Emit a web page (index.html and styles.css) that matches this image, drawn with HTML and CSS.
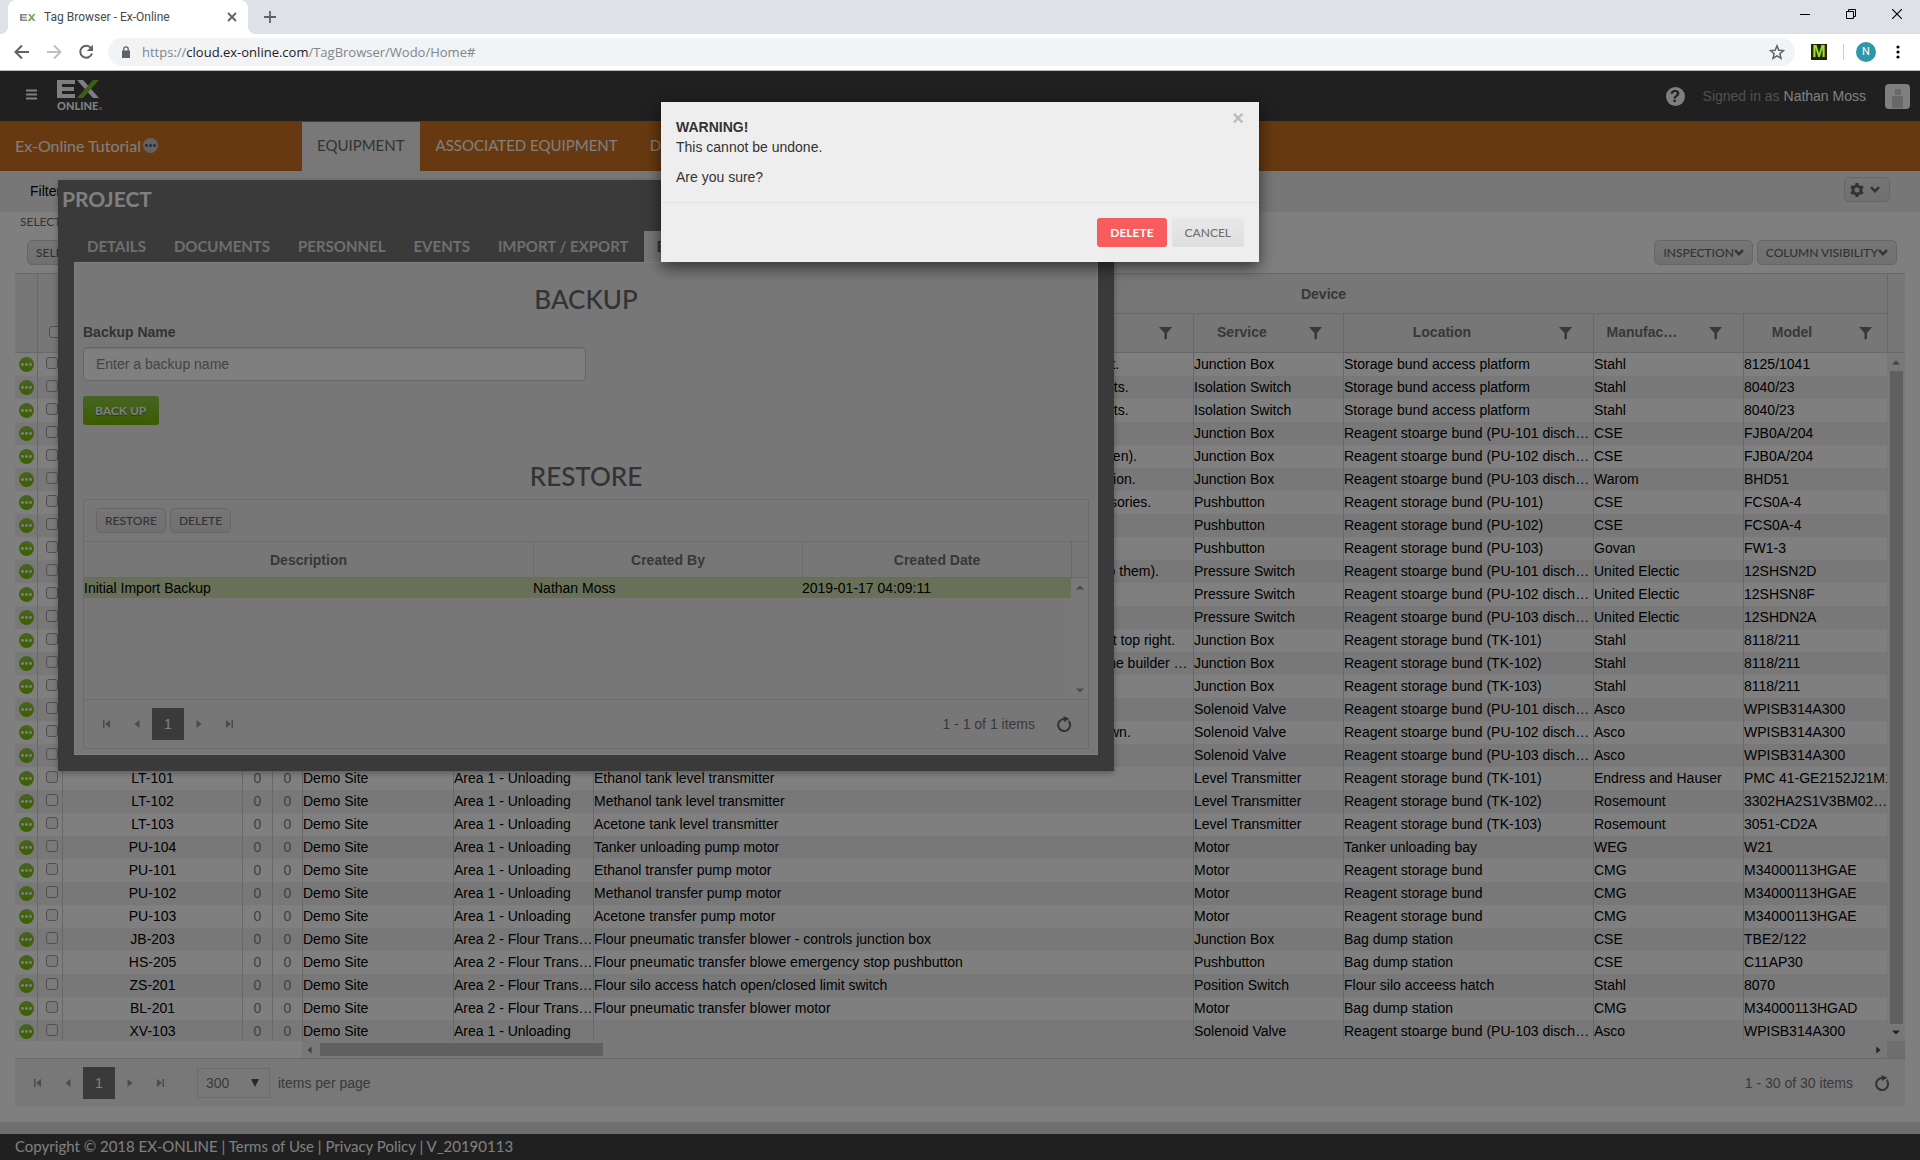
FILE: index.html
```html
<!DOCTYPE html>
<html lang="en">
<head>
<meta charset="utf-8">
<title>Tag Browser - Ex-Online</title>
<link rel="stylesheet" href="styles.css">
</head>
<body>
<svg class="defs" aria-hidden="true">
  <symbol id="i-funnel" viewBox="0 0 13 13"><path d="M0 0h13L8 6v5.500L5.500 13V6z"/></symbol>
  <symbol id="i-chev" viewBox="0 0 10 7"><path d="M1 1.200l4 4 4-4" fill="none" stroke="currentColor" stroke-width="2.400"/></symbol>
  <symbol id="i-first" viewBox="0 0 8 8"><path d="M0 0h1.500v8H0zM7 0v8L2 4z"/></symbol>
  <symbol id="i-prev" viewBox="0 0 8 8"><path d="M6.500 0v8l-5-4z"/></symbol>
  <symbol id="i-next" viewBox="0 0 8 8"><path d="M1.500 0v8l5-4z"/></symbol>
  <symbol id="i-last" viewBox="0 0 8 8"><path d="M6.500 0H8v8H6.500zM1 0v8l5-4z"/></symbol>
  <symbol id="i-up" viewBox="0 0 8 5"><path d="M0 4.500h8L4 .5z"/></symbol>
  <symbol id="i-down" viewBox="0 0 8 5"><path d="M0 .5h8l-4 4z"/></symbol>
  <symbol id="i-refresh" viewBox="0 0 16 16"><path d="M12.600 5A6 6 0 1 1 8 3" fill="none" stroke="currentColor" stroke-width="2"/><path d="M7.500 0l6 2.800-5.500 3.200z"/></symbol>
</svg>

<header class="browser">
  <div class="tabstrip">
    <div class="tab">
      <svg class="favicon" width="16" height="9" viewBox="0 0 16 9"><path d="M0 1h7v1.500H2v1.200h4.500v1.500H2v1.300h5V8H0z" fill="#8a8a8a"/><path d="M8 1h2l5.500 7h-2.200z" fill="#8a8a8a"/><path d="M13.500 1h2L10 8H7.500z" fill="#6cb52d"/></svg>
      <span class="tab-title">Tag Browser - Ex-Online</span>
      <button class="plain" aria-label="Close tab"><svg width="10" height="10" viewBox="0 0 10 10"><path d="M1 1l8 8M9 1L1 9" stroke="#5f6368" stroke-width="1.800"/></svg></button>
    </div>
    <button class="plain newtab" aria-label="New tab"><svg width="12" height="12" viewBox="0 0 12 12"><path d="M6 0v12M0 6h12" stroke="#5f6368" stroke-width="1.800"/></svg></button>
    <div class="winbtns">
      <button class="plain" aria-label="Minimize"><svg width="10" height="10"><path d="M0 5.500h10" stroke="#000"/></svg></button>
      <button class="plain" aria-label="Restore"><svg width="10" height="10"><path d="M.5 2.500h7v7h-7zM2.500 2.500v-2h7v7h-2" fill="none" stroke="#000"/></svg></button>
      <button class="plain" aria-label="Close"><svg width="10" height="10"><path d="M0 0l10 10M10 0L0 10" stroke="#000" stroke-width="1.200"/></svg></button>
    </div>
  </div>
  <div class="toolbar">
    <button class="plain nav" aria-label="Back"><svg width="16" height="16" viewBox="0 0 16 16"><path d="M15 8H2M8 1.500L1.500 8 8 14.500" fill="none" stroke="#5f6368" stroke-width="2"/></svg></button>
    <button class="plain nav" aria-label="Forward"><svg width="16" height="16" viewBox="0 0 16 16"><path d="M1 8h13M8 1.500L14.500 8 8 14.500" fill="none" stroke="#bdbfc1" stroke-width="2"/></svg></button>
    <button class="plain nav" aria-label="Reload"><svg width="16" height="16" viewBox="0 0 16 16"><path d="M13 4A6 6 0 1 0 14 9.500" fill="none" stroke="#5f6368" stroke-width="2"/><path d="M15 .8V7H8.800z" fill="#5f6368"/></svg></button>
    <div class="address">
      <svg width="8" height="12" viewBox="0 0 8 12"><path d="M0 4.500h8V12H0z" fill="#5f6368"/><path d="M1.800 5V3a2.200 2.200 0 0 1 4.400 0v2" fill="none" stroke="#5f6368" stroke-width="1.300"/></svg>
      <span class="url">https://<b>cloud.ex-online.com</b>/TagBrowser/Wodo/Home#</span>
      <svg width="16" height="16" viewBox="0 0 16 16"><path d="M8 1.800l1.800 4.400 4.700.4-3.600 3.100 1.100 4.600-4-2.500-4 2.500 1.100-4.600L1.500 6.600l4.700-.4z" fill="none" stroke="#5f6368" stroke-width="1.500"/></svg>
    </div>
    <span class="ext">M</span>
    <span class="sep"></span>
    <span class="profile">N</span>
    <button class="plain" aria-label="Menu"><svg width="4" height="14" fill="#5f6368"><circle cx="2" cy="2" r="1.600"/><circle cx="2" cy="7" r="1.600"/><circle cx="2" cy="12" r="1.600"/></svg></button>
  </div>
</header>

<div class="app">
  <header class="masthead">
    <button class="plain burger" aria-label="Menu"><svg width="11" height="11"><path d="M0 1.500h11M0 5.500h11M0 9.500h11" stroke="#fff" stroke-width="1.800"/></svg></button>
    <a class="logo" href="#" aria-label="Ex Online">
      <svg width="43" height="18" viewBox="0 0 43 18"><path d="M0 0h18v4H5v3h12v4H5v3h13v4H0z" fill="#fff"/><path d="M20 0h6l16 18h-6z" fill="#fff"/><path d="M36 0h6L26 18h-6z" fill="#7cc02c"/></svg>
      <span class="logo-text">ONLINE<i></i></span>
    </a>
    <div class="user">
      <span class="help">?</span>
      <span class="signed">Signed in as <b>Nathan Moss</b></span>
      <svg width="25" height="25"><rect width="25" height="25" rx="4" fill="#fff"/><path d="M10 5h6v6h-6zM7 12h11v12H7z" fill="#d0d0d0"/></svg>
    </div>
  </header>
  <nav class="mainnav">
    <span class="project-name">Ex-Online Tutorial <button class="dots grey" aria-label="Project menu"><svg width="11" height="3"><circle cx="1.500" cy="1.500" r="1.400"/><circle cx="5.500" cy="1.500" r="1.400"/><circle cx="9.500" cy="1.500" r="1.400"/></svg></button></span>
    <a href="#" class="on">EQUIPMENT</a><a href="#">ASSOCIATED EQUIPMENT</a><a href="#">DOCUMENTS</a>
  </nav>
  <div class="filterbar">
    <span>Filter</span>
    <button class="btn gear" aria-label="Settings"><svg width="14" height="14" viewBox="0 0 14 14"><circle cx="7" cy="7" r="4" fill="none" stroke="currentColor" stroke-width="3"/><path d="M7 0v3M7 11v3M1 3.500l2.500 1.500M10.500 9L13 10.500M1 10.500L3.500 9M10.500 5L13 3.500" stroke="currentColor" stroke-width="3"/></svg><svg width="10" height="7"><use href="#i-chev"/></svg></button>
  </div>

  <main class="content">
    <div class="selected">SELECTED ITEMS</div>
    <div class="actions">
      <button class="btn">SELECT ALL</button>
      <button class="btn push">INSPECTION<svg width="10" height="7"><use href="#i-chev"/></svg></button>
      <button class="btn">COLUMN VISIBILITY<svg width="10" height="7"><use href="#i-chev"/></svg></button>
    </div>
    <section class="grid">
      <div class="grid-head">
        <div class="clip">
          <table class="tags">
            <colgroup><col class="c-menu"><col class="c-check"><col class="c-tag"><col class="c-num"><col class="c-num"><col class="c-site"><col class="c-area"><col><col class="c-service"><col class="c-loc"><col class="c-service"><col class="c-service"></colgroup>
            <thead>
              <tr><th rowspan="2"></th><th rowspan="2" class="check-all"><input type="checkbox" aria-label="Select all"></th><th colspan="5"></th><th colspan="5" class="group">Device</th></tr>
              <tr><th>Tag</th><th></th><th></th><th>Site</th><th>Area</th><th class="f">Description<svg><use href="#i-funnel"/></svg></th><th class="f">Service<svg><use href="#i-funnel"/></svg></th><th class="f">Location<svg><use href="#i-funnel"/></svg></th><th class="f">Manufac…<svg><use href="#i-funnel"/></svg></th><th class="f">Model<svg><use href="#i-funnel"/></svg></th></tr>
            </thead>
          </table>
        </div>
        <div class="gutter"></div>
      </div>
      <div class="grid-body">
        <div class="clip">
          <table class="tags">
            <colgroup><col class="c-menu"><col class="c-check"><col class="c-tag"><col class="c-num"><col class="c-num"><col class="c-site"><col class="c-area"><col><col class="c-service"><col class="c-loc"><col class="c-service"><col class="c-service"></colgroup>
            <tbody id="rows"></tbody>
          </table>
        </div>
        <div class="vscroll"><svg width="8" height="5"><use href="#i-up"/></svg><span></span><svg class="dark" width="8" height="5"><use href="#i-down"/></svg></div>
      </div>
      <div class="hscroll"><svg width="7" height="8"><use href="#i-prev"/></svg><span></span><svg class="push dark" width="7" height="8"><use href="#i-next"/></svg><i></i></div>
      <div class="pager">
        <button class="plain pg" aria-label="First"><svg><use href="#i-first"/></svg></button>
        <button class="plain pg" aria-label="Previous"><svg><use href="#i-prev"/></svg></button>
        <button class="plain current">1</button>
        <button class="plain pg" aria-label="Next"><svg><use href="#i-next"/></svg></button>
        <button class="plain pg" aria-label="Last"><svg><use href="#i-last"/></svg></button>
        <span class="size"><select id="size"><option>300</option></select><svg width="8" height="8"><path d="M0 0h8L4 8z"/></svg></span>
        <label for="size">items per page</label>
        <span class="push">1 - 30 of 30 items</span>
        <button class="plain refresh" aria-label="Refresh"><svg width="16" height="16"><use href="#i-refresh"/></svg></button>
      </div>
    </section>
  </main>
  <footer class="footer">Copyright © 2018 EX-ONLINE | <a href="#">Terms of Use</a> | <a href="#">Privacy Policy</a> | V_20190113</footer>

  <section class="project">
    <h2>PROJECT</h2>
    <nav class="ptabs"><a href="#">DETAILS</a><a href="#">DOCUMENTS</a><a href="#">PERSONNEL</a><a href="#">EVENTS</a><a href="#">IMPORT / EXPORT</a><a href="#" class="on">BACKUP</a></nav>
    <div class="panel">
      <h3>BACKUP</h3>
      <label for="bname">Backup Name</label>
      <input id="bname" type="text" placeholder="Enter a backup name">
      <button class="green">BACK UP</button>
      <h3>RESTORE</h3>
      <div class="restore">
        <div class="rbar"><button class="btn">RESTORE</button><button class="btn">DELETE</button></div>
        <div class="rview">
          <table class="backups">
            <colgroup><col><col class="b-by"><col class="b-by"></colgroup>
            <thead><tr><th>Description</th><th>Created By</th><th>Created Date</th></tr></thead>
            <tbody><tr><td>Initial Import Backup</td><td>Nathan Moss</td><td>2019-01-17 04:09:11</td></tr></tbody>
          </table>
          <div class="rscroll"><i></i><svg width="8" height="5"><use href="#i-up"/></svg><svg width="8" height="5"><use href="#i-down"/></svg></div>
        </div>
        <div class="pager">
          <button class="plain pg" aria-label="First"><svg><use href="#i-first"/></svg></button>
          <button class="plain pg" aria-label="Previous"><svg><use href="#i-prev"/></svg></button>
          <button class="plain current">1</button>
          <button class="plain pg" aria-label="Next"><svg><use href="#i-next"/></svg></button>
          <button class="plain pg" aria-label="Last"><svg><use href="#i-last"/></svg></button>
          <span class="push">1 - 1 of 1 items</span>
          <button class="plain refresh" aria-label="Refresh"><svg width="16" height="16"><use href="#i-refresh"/></svg></button>
        </div>
      </div>
    </div>
  </section>

  <div class="scrim"></div>
  <div class="dialog" role="alertdialog">
    <button class="plain close" aria-label="Close">×</button>
    <div class="dialog-body"><b>WARNING!</b><br>This cannot be undone.<p>Are you sure?</p></div>
    <div class="dialog-foot"><button class="danger">DELETE</button><button class="cancel">CANCEL</button></div>
  </div>
</div>
<script src="app.js"></script>
</body>
</html>
```
FILE: app.js
```js
const A1 = "Area 1 - Unloading", A2 = "Area 2 - Flour Transfer";
const J = "Junction Box", P = "Pushbutton", PS = "Pressure Switch", SV = "Solenoid Valve", LT = "Level Transmitter";
const bund = n => "Reagent stoarge bund (PU-" + n + " discharge)";
const pump = n => "Reagent storage bund (PU-" + n + ")";
const tank = n => "Reagent storage bund (TK-" + n + ")";
const platform = "Storage bund access platform";
const rows = [
  ["JB-100", A1, "Junction box in local isolation. Shown with the enclosure lid fitted and all glands tight.", J, platform, "Stahl", "8125/1041"],
  ["IS-101", A1, "Isolation switch at ground level. Shown with external earth stud and cable entry points.", "Isolation Switch", platform, "Stahl", "8040/23"],
  ["IS-102", A1, "Isolation switch at ground level. Shown with external earth stud and cable entry points.", "Isolation Switch", platform, "Stahl", "8040/23"],
  ["JB-101", A1, "Ethanol pump junction box", J, bund(101), "CSE", "FJB0A/204"],
  ["JB-102", A1, "Junction box on the pump skid. Top cable entry plug has been removed (hole left open).", J, bund(102), "CSE", "FJB0A/204"],
  ["JB-103", A1, "Junction box on the pump skid. Box bolts have been fitted ready for the next inspection.", J, bund(103), "Warom", "BHD51"],
  ["HS-101", A1, "Pushbutton station, located under the pump. Supplied as a complete set with accessories.", P, pump(101), "CSE", "FCS0A-4"],
  ["HS-102", A1, "Methanol pump pushbutton", P, pump(102), "CSE", "FCS0A-4"],
  ["HS-103", A1, "Acetone pump pushbutton", P, pump(103), "Govan", "FW1-3"],
  ["PS-101", A1, "Pressure switch, tank discharge head (both glands have the correct shrouds fitted to them).", PS, bund(101), "United Electic", "12SHSN2D"],
  ["PS-102", A1, "Methanol pump pressure switch", PS, bund(102), "United Electic", "12SHSN8F"],
  ["PS-103", A1, "Acetone pump pressure switch", PS, bund(103), "United Electic", "12SHDN2A"],
  ["JB-104", A1, "Junction box mounted on the tank stair handrail. The certification plate is mounted at top right.", J, tank(101), "Stahl", "8118/211"],
  ["JB-105", A1, "Junction box, mounted on the pump stair handrail. The enclosure was supplied by the builder who supplied the skid", J, tank(102), "Stahl", "8118/211"],
  ["JB-106", A1, "Acetone tank junction box", J, tank(103), "Stahl", "8118/211"],
  ["XV-101", A1, "Ethanol solenoid valve", SV, bund(101), "Asco", "WPISB314A300"],
  ["XV-102", A1, "Solenoid valve on the bund supply header. The nameplate is on the left side as shown.", SV, bund(102), "Asco", "WPISB314A300"],
  ["XV-104", A1, "Acetone solenoid valve", SV, bund(103), "Asco", "WPISB314A300"],
  ["LT-101", A1, "Ethanol tank level transmitter", LT, tank(101), "Endress and Hauser", "PMC 41-GE2152J21M1"],
  ["LT-102", A1, "Methanol tank level transmitter", LT, tank(102), "Rosemount", "3302HA2S1V3BM02501S1"],
  ["LT-103", A1, "Acetone tank level transmitter", LT, tank(103), "Rosemount", "3051-CD2A"],
  ["PU-104", A1, "Tanker unloading pump motor", "Motor", "Tanker unloading bay", "WEG", "W21"],
  ["PU-101", A1, "Ethanol transfer pump motor", "Motor", "Reagent storage bund", "CMG", "M34000113HGAE"],
  ["PU-102", A1, "Methanol transfer pump motor", "Motor", "Reagent storage bund", "CMG", "M34000113HGAE"],
  ["PU-103", A1, "Acetone transfer pump motor", "Motor", "Reagent storage bund", "CMG", "M34000113HGAE"],
  ["JB-203", A2, "Flour pneumatic transfer blower - controls junction box", J, "Bag dump station", "CSE", "TBE2/122"],
  ["HS-205", A2, "Flour pneumatic transfer blowe emergency stop pushbutton", P, "Bag dump station", "CSE", "C11AP30"],
  ["ZS-201", A2, "Flour silo access hatch open/closed limit switch", "Position Switch", "Flour silo acceess hatch", "Stahl", "8070"],
  ["BL-201", A2, "Flour pneumatic transfer blower motor", "Motor", "Bag dump station", "CMG", "M34000113HGAD"],
  ["XV-103", A1, "", SV, bund(103), "Asco", "WPISB314A300"]
];
const dots = '<button class="dots" aria-label="Row menu"><svg width="11" height="3"><circle cx="1.5" cy="1.5" r="1.4"/><circle cx="5.5" cy="1.5" r="1.4"/><circle cx="9.5" cy="1.5" r="1.4"/></svg></button>';
document.getElementById("rows").innerHTML = rows.map(([tag, area, ...rest]) =>
  `<tr><td class="menu">${dots}</td><td class="menu"><input type="checkbox" aria-label="Select ${tag}"></td>` +
  `<td class="tag">${tag}</td><td class="num">0</td><td class="num">0</td><td>Demo Site</td><td>${area}</td>` +
  rest.map(t => `<td>${t}</td>`).join("") + "</tr>").join("");
```
FILE: styles.css
```css
* { box-sizing: border-box; }
body {
  margin: 0;
  height: 100vh;
  display: flex;
  flex-direction: column;
  overflow: hidden;
  font: 14px/20px "Liberation Sans", Arial, sans-serif;
  color: #000;
  background: #fff;
}
button, input, select { font: inherit; margin: 0; }
a { color: inherit; text-decoration: none; }
svg { display: block; fill: currentColor; flex: none; }
.defs { position: absolute; width: 0; height: 0; }
.plain { border: 0; padding: 0; background: none; color: inherit; display: flex; align-items: center; justify-content: center; }
.push { margin-left: auto; }

/* browser frame */
.browser { border-bottom: 1px solid #b6b9b6; font-family: "Open Sans", sans-serif; }
.tabstrip { display: flex; align-items: center; height: 34px; background: #dee1e6; }
.tab {
  position: relative;
  display: flex;
  align-items: center;
  width: 240px;
  height: 34px;
  margin-left: 8px;
  padding: 0 11px 0 12px;
  background: #fff;
  border-radius: 8px 8px 0 0;
}
.tab::before, .tab::after { content: ""; position: absolute; bottom: 0; width: 8px; height: 8px; }
.tab::before { left: -8px; background: radial-gradient(circle at 0 0, #dee1e6 8px, #fff 8px); }
.tab::after { right: -8px; background: radial-gradient(circle at 100% 0, #dee1e6 8px, #fff 8px); }
.tab-title { flex: 1; margin-left: 8px; font: 12px/16px Roboto, sans-serif; color: #45494d; }
.newtab { margin-left: 16px; }
.winbtns { display: flex; gap: 36px; margin: 0 18px 6px auto; }
.toolbar { display: flex; align-items: center; height: 36px; padding: 0 20px 0 14px; }
.nav { width: 16px; margin-right: 16px; }
.address {
  flex: 1;
  display: flex;
  align-items: center;
  height: 28px;
  margin: 0 16px 0 -2px;
  padding: 0 10px 0 14px;
  border-radius: 14px;
  background: #f1f3f4;
}
.url { flex: 1; margin-left: 12px; font-size: 13px; color: #80868b; }
.url b { font-weight: 400; color: #202124; }
.ext { width: 16px; height: 16px; background: #1c2412; color: #a5dc28; font: bold 16px/16px "Liberation Sans", sans-serif; text-align: center; }
.sep { width: 1px; height: 16px; margin: 0 12px 0 16px; background: #ccced0; }
.profile { width: 20px; height: 20px; margin-right: 20px; border-radius: 50%; background: #2f97aa; color: #fff; font: 11px/20px Roboto, sans-serif; text-align: center; }

/* application */
.app { position: relative; flex: 1; min-height: 0; display: flex; flex-direction: column; }
.masthead { display: flex; align-items: center; height: 50px; padding: 0 10px 0 26px; background: #404040; color: #fff; }
.burger { margin-bottom: 4px; }
.logo { margin-left: 20px; }
.logo-text { display: flex; align-items: baseline; gap: 1px; margin-top: 2px; font: 900 11px/12px Lato, sans-serif; }
.logo-text i { width: 3px; height: 3px; background: #d87422; }
.user { display: flex; align-items: center; margin-left: auto; }
.help { width: 19px; height: 19px; margin-right: 18px; border-radius: 50%; background: #fff; color: #404040; font: bold 17px/19px "Liberation Sans", sans-serif; text-align: center; }
.signed { margin-right: 19px; color: #a0a0a0; }
.signed b { font-weight: 400; color: #fff; }
.mainnav { display: flex; align-items: stretch; height: 50px; padding-top: 1px; background: #ce7220; color: #fff; font: 15px/47px Lato, sans-serif; }
.project-name { display: flex; align-items: center; gap: 2px; width: 302px; padding: 0 0 2px 15px; font-size: 16px; }
.mainnav a { padding: 0 16px; }
.mainnav .on { padding: 0 15px; background: #f0f0f0; color: #666; }
.filterbar { display: flex; align-items: center; justify-content: space-between; height: 41px; padding: 0 30px 2px; background: #efefef; }
.btn {
  display: flex;
  align-items: center;
  height: 25px;
  padding: 0 8px;
  border: 1px solid #ccc;
  border-radius: 5px;
  background: linear-gradient(#ececec, #e0e0e0);
  color: #666;
  font: 500 12px/16px Lato, sans-serif;
}
.gear { gap: 6px; padding: 0 9px 0 5px; margin-bottom: 2px; }

.content { flex: 1; min-height: 0; display: flex; flex-direction: column; padding: 0 15px 15px; }
.selected { padding: 0 5px; font: 12px/20px Lato, sans-serif; color: #666; }
.actions { display: flex; gap: 4px; padding: 8px 8px 8px 12px; }
.grid { flex: 1; min-height: 0; display: flex; flex-direction: column; border-top: 1px solid #d0d0d0; }
.grid-head, .grid-body { display: flex; }
.grid-head { background: #eee; border-bottom: 1px solid #d0d0d0; }
.grid-body { flex: 1; min-height: 0; }
.clip { flex: 1; min-width: 0; overflow: hidden; }
.gutter { width: 18px; border-left: 1px solid #d0d0d0; }
.tags { width: calc(100% + 6px); table-layout: fixed; border-collapse: separate; border-spacing: 0; }
.c-menu { width: 22px; }
.c-check { width: 25px; }
.c-tag { width: 180px; }
.c-num { width: 30px; }
.c-site { width: 151px; }
.c-area { width: 140px; }
.c-service { width: 150px; }
.c-loc { width: 250px; }
th { font-weight: 700; color: #707070; }
.tags th { position: relative; height: 38px; padding: 0 0 3px; border-left: 1px solid #d0d0d0; }
.tags tr:first-child th[colspan] { border-bottom: 1px solid #d0d0d0; height: 40px; padding-top: 4px; }
.tags th:first-child[rowspan], .tags td:first-child { border-left: 0; }
.tags th.group { padding-left: 160px; }
.tags th.f { padding-right: 53px; }
.tags th.f svg { position: absolute; right: 21px; top: 13px; width: 13px; height: 13px; }
.tags th.check-all { vertical-align: bottom; padding: 0 0 14px 11px; }
.tags td { height: 23px; padding: 0; border-left: 1px solid #d0d0d0; line-height: 23px; overflow: hidden; white-space: nowrap; text-overflow: ellipsis; }
.tags tr:nth-child(even) td { background: #f0f0f0; }
.tags .menu { text-overflow: clip; padding-left: 8px; }
.tags .menu:first-child { padding-left: 4px; }
.tags .tag { text-align: center; }
.tags .num { text-align: center; color: #808080; }
input[type=checkbox] { appearance: none; display: block; width: 12px; height: 12px; border: 1px solid #a0a0a0; border-radius: 3px; background: #f4f4f4; }
.tags td input { margin-bottom: 3px; }
.dots { display: flex; align-items: center; justify-content: center; width: 15px; height: 15px; padding: 0; border: 0; border-radius: 50%; background: linear-gradient(#8fc844, #78c000); color: #fff; }
.grey { background: #c4c4c4; color: #555; }
.vscroll { width: 18px; display: flex; flex-direction: column; align-items: center; justify-content: space-between; padding: 7px 0 6px; background: #f1f1f1; color: #888; }
.vscroll span { flex: 1; width: 13px; margin: 6px 0; background: #c1c1c1; }
.hscroll { display: flex; align-items: center; height: 17px; margin-left: 287px; padding-left: 4px; background: #f1f1f1; color: #888; }
.hscroll span { width: 283px; height: 13px; margin-left: 7px; background: #c1c1c1; }
.hscroll i { align-self: stretch; width: 18px; margin-left: 5px; background: #dcdcdc; }
.vscroll .dark, .hscroll .dark { color: #444; }

.pager { display: flex; align-items: center; height: 49px; padding: 0 15px 0 8px; border-top: 1px solid #d0d0d0; background: #f0f0f0; color: #747474; }
.pg { width: 30px; height: 32px; color: #989898; }
.pg svg { width: 8px; height: 8px; }
.current { width: 32px; height: 32px; background: #747474; color: #fff; }
.size { position: relative; margin: 0 8px 0 22px; }
.size select { appearance: none; display: block; width: 73px; height: 30px; padding: 0 8px; border: 1px solid #d8d8d8; border-radius: 0; background: #f0f0f0; color: #747474; }
.size svg { position: absolute; right: 11px; top: 11px; color: #555; }
.refresh { margin-left: 21px; color: #666; }
.footer { height: 38px; border-top: 12px solid #dfdfdf; padding-left: 15px; background: #404040; color: #fff; font: 15px/25px Lato, sans-serif; }

/* project window */
.project { position: absolute; left: 58px; top: 109px; width: 1056px; height: 591px; padding: 0 16px 16px; background: #747474; box-shadow: 0 2px 6px rgba(0, 0, 0, .3); display: flex; flex-direction: column; }
.project h2 { margin: 9px 0 22px -12px; font: 700 21px/20px Lato, sans-serif; color: #fff; }
.ptabs { display: flex; gap: 2px; font: 700 15px/30px Lato, sans-serif; color: #ddd; }
.ptabs a { padding: 0 13px 1px; }
.ptabs .on { background: #eee; color: #666; }
.panel { flex: 1; padding: 9px 8px 5px; border: 1px solid #fff; background: #eee; display: flex; flex-direction: column; }
.panel h3 { margin: 10px 0 6px; font: 500 26px/34px Lato, sans-serif; color: #666; text-align: center; }
.panel label { font-weight: 700; color: #666; line-height: 20px; margin-bottom: 5px; }
.panel > input { width: 50%; height: 34px; padding: 0 12px; border: 1px solid #ccc; border-radius: 4px; background: #fff; box-shadow: inset 0 1px 1px #e0e0e0; }
.panel > input::placeholder { color: #888; }
.green { align-self: flex-start; height: 29px; margin: 15px 0 24px; padding: 0 13px 0 12px; border: 0; border-radius: 3px; background: linear-gradient(#90c84c, #76b800); color: #fff; font: 700 12px/16px Lato, sans-serif; text-shadow: 0 1px 1px #466; }
.restore { flex: 1; display: flex; flex-direction: column; border: 1px solid #d8d8d8; }
.rbar { display: flex; gap: 4px; padding: 8px 12px; border-bottom: 1px solid #d8d8d8; }
.rview { flex: 1; display: flex; align-items: flex-start; }
.backups { flex: 1; table-layout: fixed; border-collapse: separate; border-spacing: 0; }
.b-by { width: 269px; }
.backups th { height: 36px; padding: 0; border-bottom: 1px solid #d0d0d0; }
.backups th + th { border-left: 1px solid #d8d8d8; }
.backups td { padding: 0; line-height: 20px; background: #d0e0b0; }
.rscroll { align-self: stretch; width: 17px; display: flex; flex-direction: column; align-items: center; justify-content: space-between; padding-bottom: 6px; background: #f1f1f1; color: #999; }
.rscroll i { align-self: stretch; height: 36px; margin-bottom: 7px; background: #eee; border: solid #d0d0d0; border-width: 0 0 1px 1px; }
.rscroll svg:last-child { margin-top: auto; }
.restore .pager { background: #eee; border-color: #d8d8d8; padding-right: 16px; }

/* confirmation */
.scrim { position: absolute; inset: 0; background: rgba(0, 0, 0, .5); }
.dialog { position: absolute; left: calc(50% - 299px); top: 31px; width: 598px; background: #eee; color: #333; box-shadow: 0 5px 15px rgba(0, 0, 0, .6); }
.dialog-body { padding: 15px; }
.dialog-body p { margin: 10px 0 0; }
.dialog-foot { display: flex; justify-content: flex-end; gap: 5px; padding: 15px; border-top: 1px solid #e2e2e2; }
.close { position: absolute; right: 15px; top: 8px; font: bold 20px/16px "Liberation Sans", sans-serif; color: #bbb; }
.danger, .cancel { height: 29px; padding: 0 13px; border: 0; border-radius: 3px; font: 700 12px/16px Lato, sans-serif; }
.danger { background: #f85c5c; color: #fff; }
.cancel { background: linear-gradient(#e8e8e8, #dedede); color: #707070; font-weight: 500; }
```
